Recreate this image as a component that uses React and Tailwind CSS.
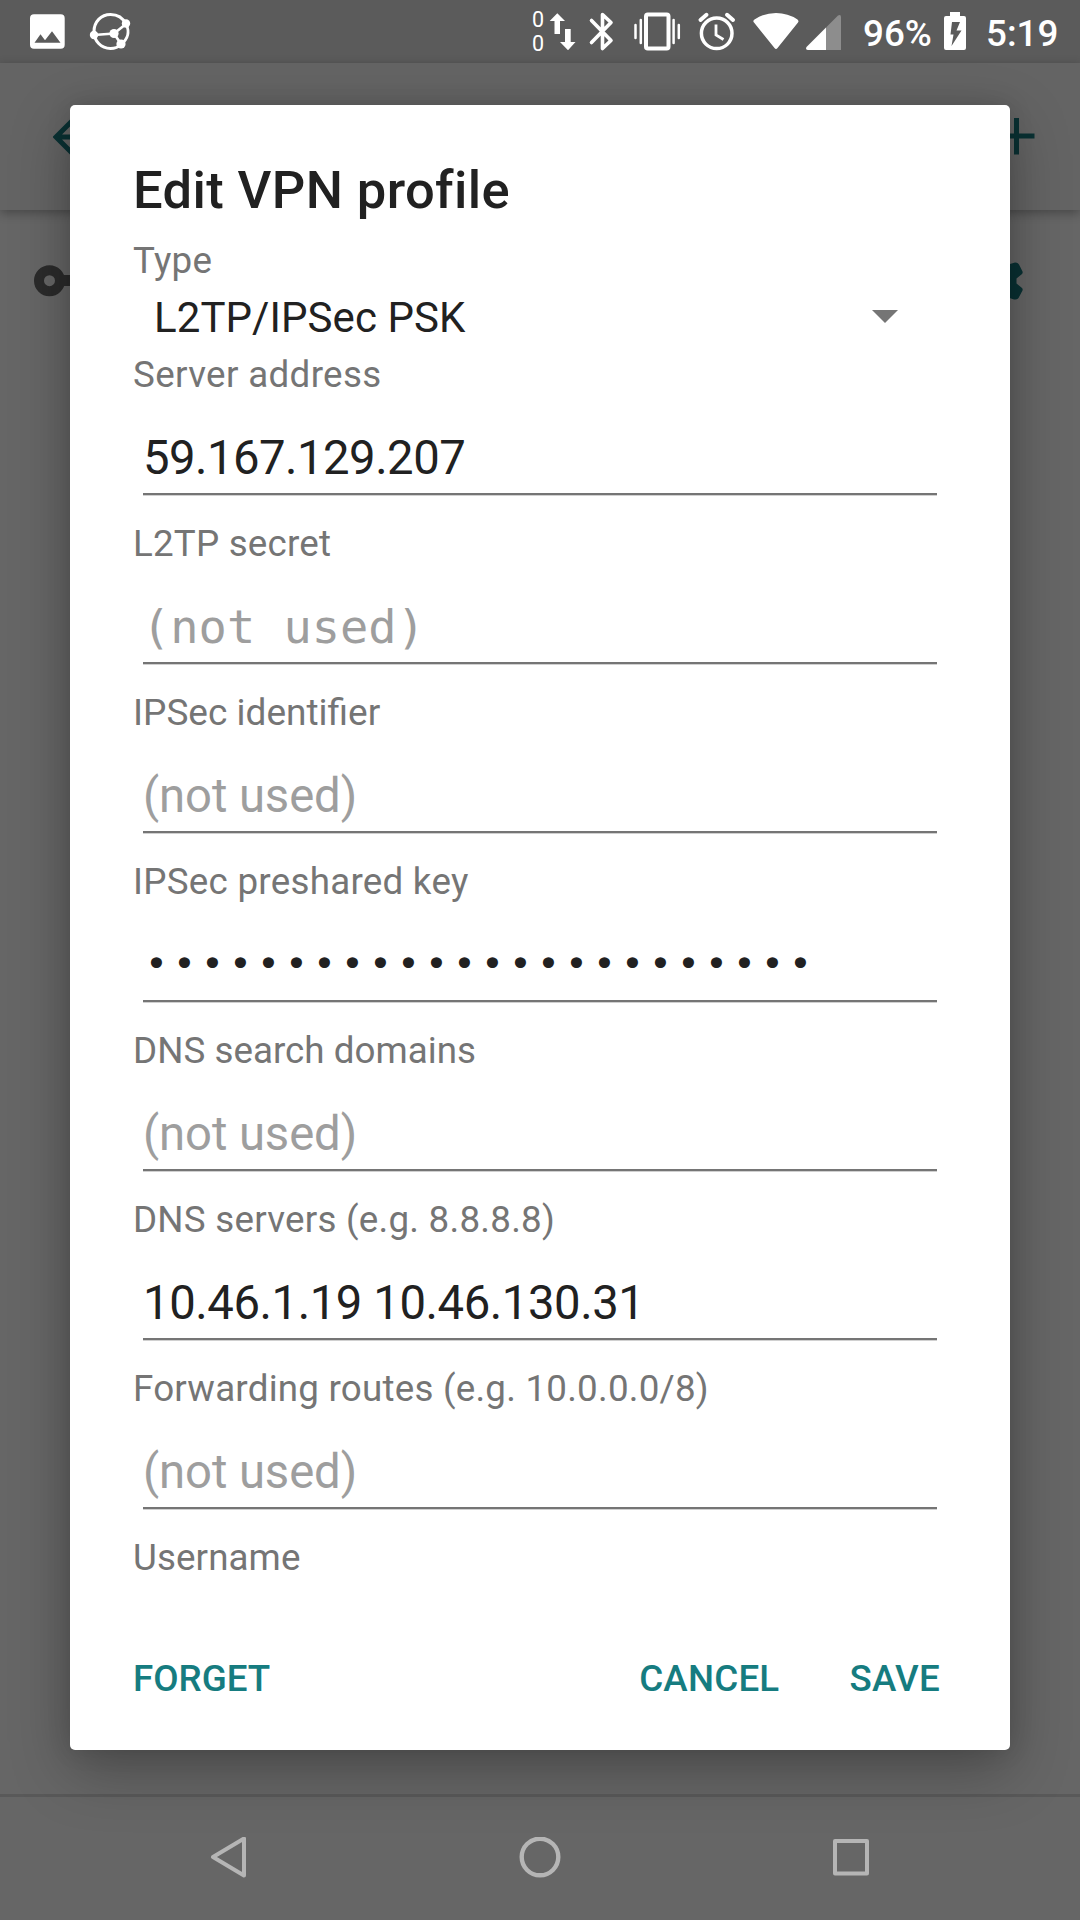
const FIELDS = [
  { label: "Server address", labelTracking: "tracking-[0.35px]", value: "59.167.129.207", valueTracking: "tracking-[-0.52px]" },
  { label: "L2TP secret", labelTracking: "tracking-[0.2px]", hint: "(not used)", mono: true },
  { label: "IPSec identifier", labelTracking: "tracking-normal text-[37px]", hint: "(not used)" },
  { label: "IPSec preshared key", labelTracking: "tracking-[0.26px]", secret: "•".repeat(24) },
  { label: "DNS search domains", labelTracking: "tracking-[0.03px]", hint: "(not used)" },
  { label: "DNS servers (e.g. 8.8.8.8)", labelTracking: "tracking-[0.24px]", value: "10.46.1.19 10.46.130.31", valueTracking: "tracking-[-0.43px]" },
  { label: "Forwarding routes (e.g. 10.0.0.0/8)", labelTracking: "tracking-[0.22px]", hint: "(not used)" },
];

// Status icons share one 63px tall coordinate system; x is where the slot starts.
function Slot({ x, w, children }) {
  return (
    <svg width={w} height="63" viewBox={`${x} 0 ${w} 63`} fill="#fff" className="block shrink-0">
      {children}
    </svg>
  );
}

function StatusBar() {
  return (
    <div className="flex h-[63px] bg-[#5b5b5b] pl-[26px] text-white">
      <Slot x={26} w={50}>
        <path fillRule="evenodd" d="M34 14.3h26.7a4 4 0 0 1 4 4v26.4a4 4 0 0 1-4 4H34a4 4 0 0 1-4-4V18.300a4 4 0 0 1 4-4zM34.500 42.800h26L52 31.300l-7 9-4.500-6z" />
      </Slot>
      <Slot x={76} w={452}>
        <g fill="none" stroke="#fff" strokeWidth="3">
          <path d="M126 24C123 18 117 14.400 110.500 14.400C101 14.400 94 22 94 31.500C94 41 101 48.500 110.500 48.500C115 48.500 118 47.500 121 44.500" />
          <path d="M126 24C129.500 31 129 38 121 44.500M94 35L114 33.500L126 24M114 33.500L121 44" strokeWidth="2.700" />
        </g>
        <circle cx="94" cy="35" r="4.200" /><circle cx="126" cy="23.500" r="4.200" />
        <circle cx="121" cy="44" r="4.600" /><circle cx="114" cy="33.500" r="4.600" />
      </Slot>
      <div className="flex w-[19px] flex-col items-center pl-[1px] pt-[8px] text-[21.500px] leading-[24px]">
        <span>0</span>
        <span>0</span>
      </div>
      <Slot x={547} w={36}>
        <path d="M557.300 13.300L565 21H560V34H554.500V21H549.700zM568 50.200L560 42H565V29H570.700V42H575.500z" />
      </Slot>
      <Slot x={583} w={41}>
        <path d="M591.500 20.500L611 40.500L602.500 48.500V14.500L611 22.500L591.500 42.500" fill="none" stroke="#fff" strokeWidth="3.600" strokeLinejoin="round" strokeLinecap="round" />
      </Slot>
      <Slot x={624} w={66}>
        <rect x="646" y="14.500" width="22.500" height="34" rx="1.800" fill="none" stroke="#fff" strokeWidth="4" />
        <path d="M635.500 25V38M640.800 20V43M673.600 20V43M678.800 25V38" stroke="#fff" strokeWidth="2.500" strokeLinecap="round" />
      </Slot>
      <Slot x={690} w={56}>
        <g fill="none" stroke="#fff">
          <circle cx="716.700" cy="33.300" r="15.300" strokeWidth="3.500" />
          <path d="M716 24.500V35L723.500 39.500" strokeWidth="2.800" />
          <path d="M700.500 20L706.500 14.800M733 20L727 14.800" strokeWidth="4" strokeLinecap="round" />
        </g>
      </Slot>
      <Slot x={746} w={56}>
        <path d="M754 22.500Q752.500 21 754.500 19.500Q764 13 776 13Q788 13 797.500 19.500Q799.200 21 798 22.500L777.500 48Q776 50 774.500 48z" />
      </Slot>
      <Slot x={802} w={61}>
        <path d="M826 27.500L838 15.500Q841 14 841 17V50H826z" fill="#8d8d8d" />
        <path d="M826 27.500V50H808Q805 49.500 806.500 47z" />
      </Slot>
      <span className="w-[77px] text-[36.750px] font-medium leading-[67px]">96%</span>
      <Slot x={940} w={46}>
        <path fillRule="evenodd" d="M950 12h10v4h4a2 2 0 0 1 2 2v30a2 2 0 0 1-2 2h-18a2 2 0 0 1-2-2V18a2 2 0 0 1 2-2h4zM952 22L950.500 34.500H953.500L951.500 46L961.500 30.500H956.500L960 22z" />
      </Slot>
      <span className="text-[36.750px] font-medium leading-[67px]">5:19</span>
    </div>
  );
}

function Backdrop() {
  return (
    <div className="flex h-full flex-col">
      <StatusBar />
      <div className="z-10 flex h-[147px] items-center justify-between bg-[#646464] pl-[53px] pr-[44px] shadow-[0_3px_10px_rgba(0,0,0,0.3)]">
        <svg width="42" height="42" viewBox="0 0 42 42" fill="none" stroke="#0a3133" strokeWidth="5">
          <path d="M42 21H5M21.500 2.500L3 21L21.500 39.500" />
        </svg>
        <svg width="38" height="38" viewBox="0 0 38 38" fill="none" stroke="#0a3133" strokeWidth="5">
          <path d="M19 .5V37.500M.5 19H37" transform="translate(-.5 -1)" />
        </svg>
      </div>
      <div className="flex h-[142px] items-center justify-between bg-[#666] pl-[34px] pr-[57px]">
        <svg width="58" height="32" viewBox="0 0 58 32" fill="#2b2b2b">
          <path fillRule="evenodd" d="M15.500 .2a15.500 15.500 0 1 1 0 31a15.500 15.500 0 0 1 0-31zM15.500 10.200a5.500 5.500 0 1 0 0 11a5.500 5.500 0 0 0 0-11z" />
          <rect x="26" y="10" width="32" height="11" />
        </svg>
        <svg width="38" height="38" viewBox="0 0 38 38" fill="#0a3133">
          <path d="M0 12H20L25 2L30 .5Q33 .5 34 2.500L37.500 9.500Q38 11 37 12L31.500 16.500V21.500L37 26Q38 27 37.500 28.500L33.500 36Q32 38 29 37.500L23 35.500L18 26H0z" />
        </svg>
      </div>
      <div className="flex-1 bg-[#666]" />
      <div className="flex h-[126px] items-center justify-center border-t-[3px] border-[#595959] bg-[#666]">
        <svg width="311" height="44" viewBox="-155.500 -22 311 44" fill="none" stroke="#b5b5b5" strokeWidth="4" strokeLinejoin="round">
          <path d="M-16.500 -2L14.500 -20.500V16.500z" />
        </svg>
        <svg width="311" height="44" viewBox="-155.500 -22 311 44" fill="none" stroke="#b5b5b5" strokeWidth="4.400">
          <circle cx="-.5" cy="-2" r="18.300" />
        </svg>
        <svg width="311" height="44" viewBox="-155.500 -22 311 44" fill="none" stroke="#b5b5b5" strokeWidth="4" strokeLinejoin="round">
          <rect x="-16.500" y="-18" width="32" height="32.500" />
        </svg>
      </div>
    </div>
  );
}

function Label({ children, tracking = "tracking-[0.3px]" }) {
  return (
    <div className="h-[43px] whitespace-nowrap text-[36.750px] leading-[43px] text-[#757575]">
      <span className={tracking}>{children}</span>
    </div>
  );
}

function Field({ label, labelTracking, value, valueTracking, hint, mono, secret }) {
  return (
    <div className="h-[169px]">
      <Label tracking={labelTracking}>{label}</Label>
      <div className="ml-[10px] mt-[34px] h-[65px] w-[794px] whitespace-nowrap border-b-2 border-[#757575] text-[47.250px] leading-[56px] shadow-[0_1px_0_#d0d0d0]">
        {value && <span className={`text-[#212121] ${valueTracking}`}>{value}</span>}
        {hint && !mono && <span className="tracking-[-0.1px] text-[#9e9e9e]">{hint}</span>}
        {mono && (
          <span className="-ml-px block font-['DejaVu_Sans_Mono',monospace] text-[47px] text-[#9e9e9e]">{hint}</span>
        )}
        {secret && (
          <span className="block pl-[2px] font-['DejaVu_Sans_Mono',monospace] text-[38px] leading-[54px] tracking-[5.120px] text-[#212121]">
            {secret}
          </span>
        )}
      </div>
    </div>
  );
}

function Dialog() {
  return (
    <div className="absolute left-[70px] top-[105px] z-20 flex h-[1645px] w-[940px] flex-col rounded-[5px] bg-white shadow-[0_20px_60px_rgba(0,0,0,0.28),0_0_24px_rgba(0,0,0,0.12)]">
      <div className="h-[1478px] overflow-hidden pl-[63px] pt-[54px]">
        <h1 className="mb-[18px] text-[52.500px] font-medium leading-[62px] tracking-[0.38px] text-[#212121]">
          Edit VPN profile
        </h1>
        <Label>Type</Label>
        <div className="flex h-[71px] items-center justify-between pl-[21px] pr-[112px]">
          <span className="text-[42px] leading-[50px] tracking-[0.08px] text-[#212121]">L2TP/IPSec PSK</span>
          <svg width="26" height="13" viewBox="0 0 26 13" fill="#757575" className="mb-[2px]">
            <path d="M0 0H26L13 13z" />
          </svg>
        </div>
        {FIELDS.map((f) => (
          <Field key={f.label} {...f} />
        ))}
        <Label tracking="tracking-[0.1px]">Username</Label>
      </div>
      <div className="flex pl-[63px] pr-[70px] pt-[74px] text-[36.750px] font-medium leading-[43px] text-[#167c80]">
        <button className="mr-auto">FORGET</button>
        <button className="mr-[70px] tracking-[0.2px]">CANCEL</button>
        <button className="tracking-[0.25px]">SAVE</button>
      </div>
    </div>
  );
}

export default function App() {
  return (
    <div className="relative h-[1920px] w-[1080px] overflow-hidden bg-[#666] font-['Roboto',sans-serif]">
      <Backdrop />
      <Dialog />
    </div>
  );
}
